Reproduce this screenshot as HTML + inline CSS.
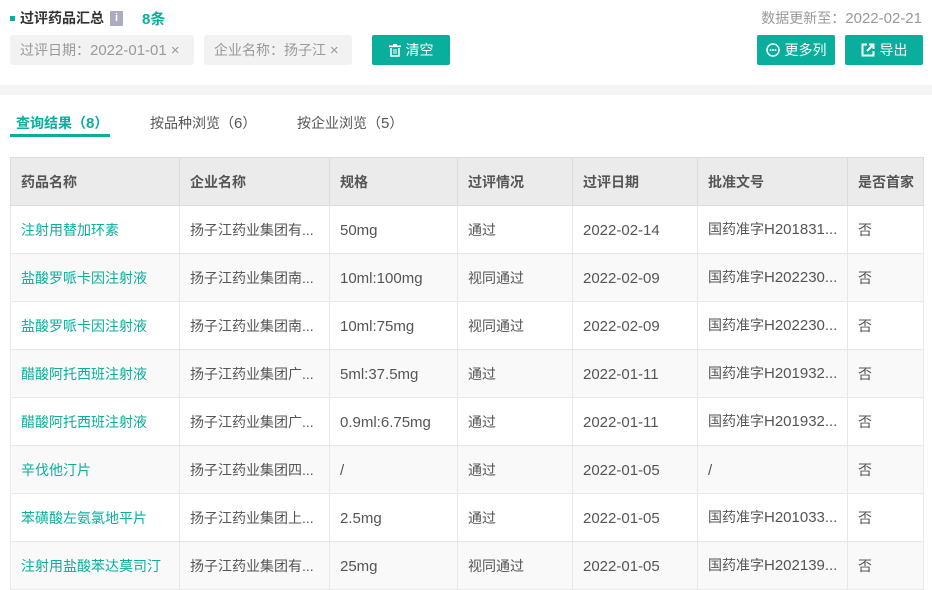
<!DOCTYPE html>
<html><head><meta charset="utf-8"><style>
*{margin:0;padding:0;box-sizing:border-box}
body{width:932px;height:590px;overflow:hidden;background:#fff;font-family:"Liberation Sans","Noto Sans CJK SC",sans-serif;font-size:14px;color:#555;position:relative}
.abs{position:absolute}
.n{font-size:15px}
.s{position:relative;top:1px}
.title{left:10px;top:8px;font-size:14px;font-weight:bold;color:#333;display:flex;align-items:center;height:20px}
.sq{width:5px;height:5px;background:#0aae9c;margin-right:5px}
.info{display:inline-block;width:13px;height:15px;background:#a9adbd;color:#fff;font-size:11px;text-align:center;line-height:15px;margin-left:6px;border-radius:1px;position:relative}
.cnt{color:#0aae9c;margin-left:19px;font-size:15px}
.upd{right:10px;top:8px;color:#999;font-size:14px}
.tag{top:35px;height:30px;background:#f2f2f2;border-radius:3px;color:#999;line-height:30px;padding-left:10px;font-size:14px}
.btn{top:35px;height:30px;background:#0aae9c;color:#fff;border-radius:2px;font-size:14px;line-height:30px;display:flex;align-items:center;justify-content:center;gap:5px}
.band{left:0;top:85px;width:932px;height:10px;background:#f5f5f5}
.tab{top:113px;font-size:14px;color:#555}
.ul{left:10px;top:134px;width:100px;height:3px;background:#0aae9c}
table{position:absolute;left:10px;top:157px;border-collapse:collapse;table-layout:fixed;width:913px}
td,th{height:48px;border:1px solid #e8e8ec;padding:0 10px;text-align:left;white-space:nowrap;overflow:hidden;font-size:14px;vertical-align:middle;line-height:20px}
th{background:#ebebeb;color:#555;font-weight:bold;border-color:#dcdcdc}
tbody tr:nth-child(even) td{background:#f9f9f9}
td.g{color:#0aae9c}
</style></head><body>
<div class="abs title"><span class="sq"></span>过评药品汇总<span class="info">i</span><span class="cnt">8条</span></div>
<div class="abs upd"><span>数据更新至：</span><span class="n">2022-02-21</span></div>
<div class="abs tag" style="left:10px;width:184px">过评日期：<span class="n">2022-01-01 ×</span></div>
<div class="abs tag" style="left:204px;width:148px">企业名称：扬子江 <span class="n">×</span></div>
<div class="abs btn" style="left:372px;width:78px"><svg width="12" height="13" viewBox="0 0 12 13"><rect x="0" y="1.5" width="12" height="1.6" fill="#fff"/><rect x="4" y="0" width="4" height="1.6" fill="#fff"/><path d="M2 4v8h8V4" fill="none" stroke="#fff" stroke-width="1.5"/><path d="M5 5v5M7 5v5" stroke="#fff" stroke-width="1"/></svg>清空</div>
<div class="abs btn" style="left:757px;width:78px"><svg width="14" height="14" viewBox="0 0 14 14"><circle cx="7" cy="7" r="6" fill="none" stroke="#fff" stroke-width="1.5"/><circle cx="4.5" cy="7" r="1" fill="#fff"/><circle cx="7" cy="7" r="1" fill="#fff"/><circle cx="9.5" cy="7" r="1" fill="#fff"/></svg>更多列</div>
<div class="abs btn" style="left:845px;width:78px"><svg width="14" height="14" viewBox="0 0 14 14"><path d="M6 1.5H1.5v11h11V8" fill="none" stroke="#fff" stroke-width="2"/><path d="M6 8L12 2M8 1.5h4.5V6" fill="none" stroke="#fff" stroke-width="2"/></svg>导出</div>
<div class="abs band"></div>
<div class="abs tab" style="left:16px;color:#0aae9c;font-weight:bold">查询结果（<span class="n">8</span>）</div>
<div class="abs tab" style="left:150px">按品种浏览（<span class="n">6</span>）</div>
<div class="abs tab" style="left:297px">按企业浏览（<span class="n">5</span>）</div>
<div class="abs ul"></div>
<table>
<colgroup><col style="width:169px"><col style="width:150px"><col style="width:128px"><col style="width:115px"><col style="width:125px"><col style="width:150px"><col style="width:76px"></colgroup>
<thead><tr><th>药品名称</th><th>企业名称</th><th>规格</th><th>过评情况</th><th>过评日期</th><th>批准文号</th><th>是否首家</th></tr></thead>
<tbody>
<tr><td class="g">注射用替加环素</td><td>扬子江药业集团有...</td><td><span class="n s">50mg</span></td><td>通过</td><td><span class="n s">2022-02-14</span></td><td>国药准字<span class="n">H201831...</span></td><td>否</td></tr>
<tr><td class="g">盐酸罗哌卡因注射液</td><td>扬子江药业集团南...</td><td><span class="n s">10ml:100mg</span></td><td>视同通过</td><td><span class="n s">2022-02-09</span></td><td>国药准字<span class="n">H202230...</span></td><td>否</td></tr>
<tr><td class="g">盐酸罗哌卡因注射液</td><td>扬子江药业集团南...</td><td><span class="n s">10ml:75mg</span></td><td>视同通过</td><td><span class="n s">2022-02-09</span></td><td>国药准字<span class="n">H202230...</span></td><td>否</td></tr>
<tr><td class="g">醋酸阿托西班注射液</td><td>扬子江药业集团广...</td><td><span class="n s">5ml:37.5mg</span></td><td>通过</td><td><span class="n s">2022-01-11</span></td><td>国药准字<span class="n">H201932...</span></td><td>否</td></tr>
<tr><td class="g">醋酸阿托西班注射液</td><td>扬子江药业集团广...</td><td><span class="n s">0.9ml:6.75mg</span></td><td>通过</td><td><span class="n s">2022-01-11</span></td><td>国药准字<span class="n">H201932...</span></td><td>否</td></tr>
<tr><td class="g">辛伐他汀片</td><td>扬子江药业集团四...</td><td><span class="n s">/</span></td><td>通过</td><td><span class="n s">2022-01-05</span></td><td><span class="n s">/</span></td><td>否</td></tr>
<tr><td class="g">苯磺酸左氨氯地平片</td><td>扬子江药业集团上...</td><td><span class="n s">2.5mg</span></td><td>通过</td><td><span class="n s">2022-01-05</span></td><td>国药准字<span class="n">H201033...</span></td><td>否</td></tr>
<tr><td class="g">注射用盐酸苯达莫司汀</td><td>扬子江药业集团有...</td><td><span class="n s">25mg</span></td><td>视同通过</td><td><span class="n s">2022-01-05</span></td><td>国药准字<span class="n">H202139...</span></td><td>否</td></tr>
</tbody>
</table>
</body></html>
